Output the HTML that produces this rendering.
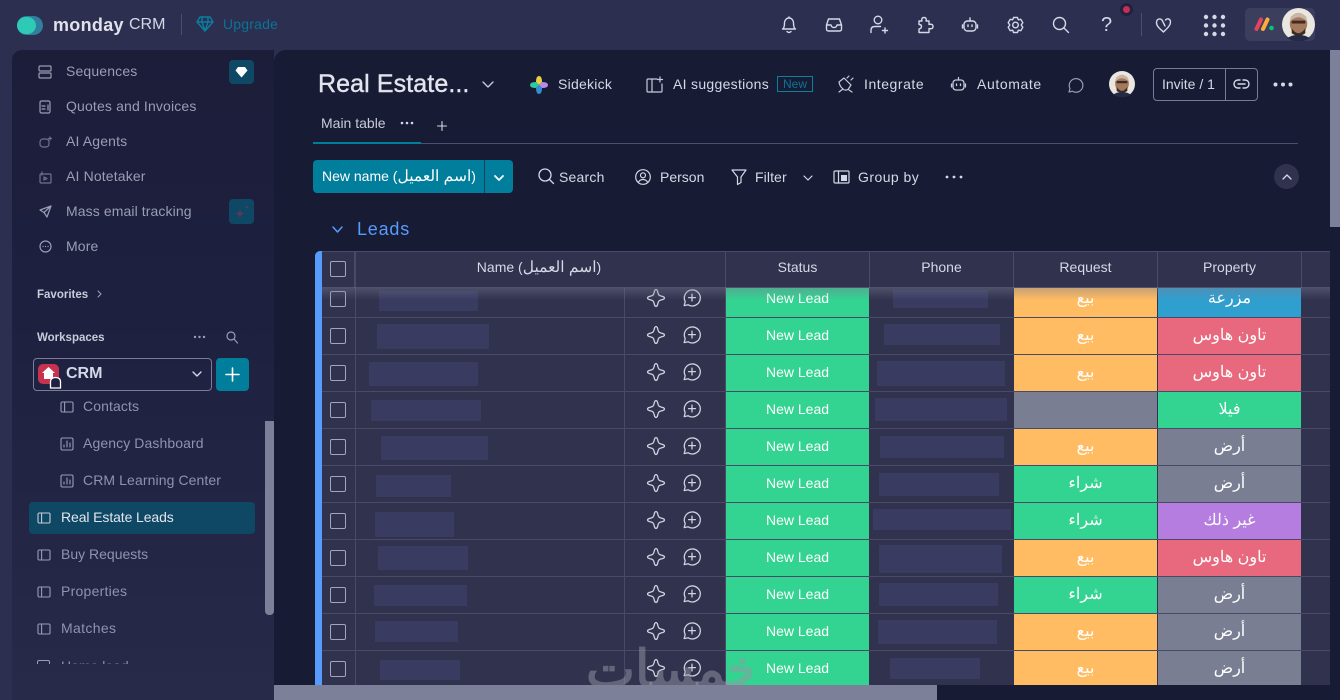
<!DOCTYPE html>
<html lang="en"><head><meta charset="utf-8"><title>monday CRM</title>
<style>
*{box-sizing:border-box}
html,body{margin:0;padding:0;width:1340px;height:700px;overflow:hidden;background:#2c2f4f;font-family:"Liberation Sans","Noto Sans CJK SC",sans-serif;color:#d5d8e6}
.a{position:absolute}
.t{position:absolute;white-space:nowrap;font-size:14px;line-height:18px}
svg.i{position:absolute;fill:none;stroke:#d5d8e6;stroke-width:1.4;stroke-linecap:round;stroke-linejoin:round;overflow:visible}
#side{left:12px;top:50px;width:262px;height:650px;background:linear-gradient(#1b1d39,#1e2040 40%,#282a4a 100%);border-radius:10px 0 0 0}
.nav{color:#9a9db4;letter-spacing:.15px}
.sub{color:#8f93ad;letter-spacing:.1px}
#main{left:274px;top:50px;width:1066px;height:650px;background:#181b34;border-radius:12px 0 0 0}
.row{position:absolute;left:322px;width:1008px;height:37px;background:#30324e;border-bottom:1px solid #484a68;overflow:hidden}
.row .v{position:absolute;top:0;width:1px;height:37px;background:#484a68}
.c{position:absolute;top:0;height:36px;width:143px;color:#fff;text-align:center;font-size:14px;line-height:35px}
.rq,.pr{font-size:16px}
.g{background:#33d391}.o{background:#ffbc62}.b{background:#2f9fcf}.p{background:#e8697d}.y{background:#797e93}.u{background:#b57de0}
.s{left:404px}.rq{left:692px}.pr{left:836px}
.ph{position:absolute;background:#393b61}
.cb{position:absolute;left:8px;top:10px;width:16px;height:16px;border:1px solid #a3a6bb;border-radius:2px}
.h{position:absolute;top:251px;height:37px;background:#30324e;font-size:14px;line-height:31px;text-align:center;color:#d5d8e6;border-right:1px solid #484a68;border-top:1px solid #484a68}
.ar{font-size:15.5px}
.k{stroke-width:1.3!important;stroke:#d0d2df!important}
</style></head><body>
<svg width="0" height="0" style="position:absolute"><defs>
<symbol id="star" viewBox="0 0 20 20"><path d="M10 1.500C11.200 1.500 11.500 3 12 5 12.600 7 13 7.400 15 8 17 8.500 18.500 8.800 18.500 10 18.500 11.200 17 11.500 15 12 13 12.600 12.600 13 12 15 11.500 17 11.200 18.500 10 18.500 8.800 18.500 8.500 17 8 15 7.400 13 7 12.600 5 12 3 11.500 1.500 11.200 1.500 10 1.500 8.800 3 8.500 5 8 7 7.400 7.400 7 8 5 8.500 3 8.800 1.500 10 1.500Z"/></symbol>
<symbol id="cm" viewBox="0 0 20 20"><path d="M2.200 17.600 3.200 13.600A8 8 0 1 1 6.200 16.800Z"/><path d="M10 6.200V13M6.600 9.600H13.400"/></symbol>
<symbol id="tb" viewBox="0 0 14 14"><rect x="1" y="2" width="12" height="10" rx="1.200"/><path d="M4.600 2V12"/></symbol>
<symbol id="av" viewBox="0 0 34 34"><circle cx="17" cy="17" r="17" fill="#e9e7df"/><ellipse cx="17" cy="16" rx="9" ry="11" fill="#a5795c"/><path d="M8 14Q17 5 26 14L25 9Q17 1 9 9Z" fill="#c9b6a6"/><rect x="10" y="13" width="14" height="3" fill="#3e2c25"/><path d="M10 21Q17 31 24 21L24 26Q17 31 10 26Z" fill="#3b2a22"/><path d="M5 31Q17 24 29 31L22 34H12Z" fill="#252a44"/></symbol>
</defs></svg>

<!-- top bar -->
<div class="a" style="left:17px;top:16px;width:26px;height:19px;border-radius:10px;background:#2f7f9d"></div>
<div class="a" style="left:17px;top:17px;width:19px;height:17px;border-radius:9px;background:#2ec9b7"></div>
<div class="t" style="left:53px;top:13px;font-size:18px;line-height:24px;font-weight:700;color:#e0e1ea;letter-spacing:.3px">monday</div>
<div class="t" style="left:129px;top:13px;font-size:16px;line-height:24px;color:#d5d8e6">CRM</div>
<div class="a" style="left:181px;top:14px;width:1px;height:21px;background:#4b4e6e"></div>
<svg class="i" style="left:196px;top:16px;stroke:#0a7fa0" width="18" height="16" viewBox="0 0 18 16"><path d="M4 1H14L17 6 9 15 1 6ZM1 6H17M6 6 9 15 12 6M6 1 6 6M12 1 12 6"/></svg>
<div class="t" style="left:223px;top:15px;color:#0a7396;letter-spacing:.2px">Upgrade</div>

<svg class="i" style="left:781px;top:16px" width="16" height="18" viewBox="0 0 16 18"><path d="M2 13Q3.500 11 3.500 7A4.500 5 0 0 1 12.500 7Q12.500 11 14 13ZM1.500 13H14.500M6 15.500Q8 17.500 10 15.500M8 1V2"/></svg>
<svg class="i" style="left:825px;top:17px" width="18" height="16" viewBox="0 0 18 16"><path d="M1.500 8 3.500 2H14.500L16.500 8V12Q16.500 14 14.500 14H3.500Q1.500 14 1.500 12ZM1.500 8H6Q6.500 10.500 9 10.500 11.500 10.500 12 8H16.500"/></svg>
<svg class="i" style="left:870px;top:15px" width="20" height="19" viewBox="0 0 20 19"><circle cx="8" cy="5" r="3.800"/><path d="M1 17.500V15Q1 11.500 5 11.500H10.500M15 13V18M12.500 15.500H17.500"/></svg>
<svg class="i" style="left:916px;top:16px" width="18" height="18" viewBox="0 0 18 18"><path d="M3 5H6Q5 1.500 8 1.500 11 1.500 10 5H13V8.500Q17 7.500 17 10.500 17 13.500 13 12.500V16.500H3V13Q5.500 12.500 5.500 10.500 5.500 8.500 3 8.500Z"/></svg>
<svg class="i" style="left:962px;top:17px" width="16" height="16" viewBox="0 0 16 16"><rect x="2" y="4" width="12" height="10" rx="3.500"/><path d="M8 1V4M.5 8V11M15.500 8V11M6 8V9.500M10 8V9.500"/></svg>
<svg class="i" style="left:1007px;top:16px" width="17" height="18" viewBox="0 0 17 18"><path d="M6.500 1.500H10.500L11.300 3.800 13.800 3.300 15.800 6.700 14.200 9 15.800 11.300 13.800 14.700 11.300 14.200 10.500 16.500H6.500L5.700 14.200 3.200 14.700 1.200 11.300 2.800 9 1.200 6.700 3.200 3.300 5.700 3.800Z"/><circle cx="8.500" cy="9" r="2.800"/></svg>
<svg class="i" style="left:1052px;top:16px" width="18" height="18" viewBox="0 0 18 18"><circle cx="7.500" cy="7.500" r="6"/><path d="M12 12 16.500 16.500"/></svg>
<div class="t" style="left:1099px;top:13px;width:15px;text-align:center;font-size:20px;line-height:24px;color:#d5d8e6">?</div>
<div class="a" style="left:1120px;top:3px;width:13px;height:13px;border-radius:50%;background:#c62e52;border:3px solid #20223f"></div>
<div class="a" style="left:1101px;top:13px;height:21px;width:0"></div>
<div class="a" style="left:1101px;top:0;width:0"></div>
<div class="a" style="left:1101px;top:0;width:0"></div>
<div class="a" style="left:1141px;top:13px;width:1px;height:23px;background:#4b4e6e"></div>
<svg class="i" style="left:1155px;top:17px" width="17" height="16" viewBox="0 0 17 16"><path d="M8.500 15C4 11 1.500 9 1.500 5.500 1.500 2.500 4.500 .8 7 3L10 9M8.500 15C12.500 11 15.500 8.500 15.500 5 15.500 2 12.500 .8 10.500 3"/></svg>
<svg class="a" style="left:1203px;top:14px" width="23" height="23" viewBox="0 0 23 23" fill="#d5d8e6"><circle cx="3" cy="3" r="2.200"/><circle cx="11.500" cy="3" r="2.200"/><circle cx="20" cy="3" r="2.200"/><circle cx="3" cy="11.500" r="2.200"/><circle cx="11.500" cy="11.500" r="2.200"/><circle cx="20" cy="11.500" r="2.200"/><circle cx="3" cy="20" r="2.200"/><circle cx="11.500" cy="20" r="2.200"/><circle cx="20" cy="20" r="2.200"/></svg>
<div class="a" style="left:1245px;top:8px;width:70px;height:33px;border-radius:5px;background:#3b3e5d"></div>
<svg class="a" style="left:1254px;top:17px" width="20" height="14" viewBox="0 0 20 14"><path d="M2.500 12 7 2.500" stroke="#e2445c" stroke-width="4" stroke-linecap="round"/><path d="M9 12 13.500 2.500" stroke="#fdab3d" stroke-width="4" stroke-linecap="round"/><circle cx="17.500" cy="11" r="2.300" fill="#00ca72"/></svg>
<svg class="a" style="left:1282px;top:8px" width="33" height="33"><use href="#av"/></svg>

<!-- sidebar -->
<div id="side" class="a"></div>
<svg class="i" style="left:38px;top:65px;stroke:#9a9db4;stroke-width:1.200" width="14" height="14" viewBox="0 0 14 14"><rect x="1" y="1" width="12" height="5" rx="1"/><rect x="1" y="8" width="12" height="5" rx="1"/></svg>
<div class="t nav" style="left:66px;top:62px">Sequences</div>
<div class="a" style="left:229px;top:60px;width:25px;height:24px;border-radius:4px;background:#0e4864"></div>
<svg class="a" style="left:235px;top:66px" width="13" height="12" viewBox="0 0 13 12"><path d="M3 1H10L12.500 4.500 6.500 11.500 .5 4.500Z" fill="#fff"/></svg>
<svg class="i" style="left:39px;top:100px;stroke:#9a9db4;stroke-width:1.200" width="12" height="14" viewBox="0 0 12 14"><rect x="1" y="1" width="10" height="12" rx="1.500"/><path d="M3 6H6M3 9H6M9 5V10"/></svg>
<div class="t nav" style="left:66px;top:97px">Quotes and Invoices</div>
<svg class="i" style="left:39px;top:136px;stroke:#6f7290;stroke-width:1.200" width="13" height="12" viewBox="0 0 13 12"><rect x="1" y="3" width="9" height="8" rx="3"/><path d="M11 1V4M9.500 2.500H12.500"/></svg>
<div class="t nav" style="left:66px;top:132px">AI Agents</div>
<svg class="i" style="left:39px;top:171px;stroke:#6f7290;stroke-width:1.200" width="13" height="13" viewBox="0 0 13 13"><rect x="1" y="3" width="11" height="9" rx="1"/><path d="M5 6 8 7.500 5 9ZM3 1V4"/></svg>
<div class="t nav" style="left:66px;top:167px">AI Notetaker</div>
<svg class="i" style="left:39px;top:205px;stroke:#9a9db4;stroke-width:1.200" width="13" height="13" viewBox="0 0 13 13"><path d="M12 1 1 5 5 7.500 8 12ZM12 1 5 7.500"/></svg>
<div class="t nav" style="left:66px;top:202px;letter-spacing:.1px">Mass email tracking</div>
<div class="a" style="left:229px;top:199px;width:25px;height:25px;border-radius:4px;background:#0e4864"></div>
<svg class="a" style="left:234px;top:204px" width="16" height="16" viewBox="0 0 16 16" fill="#5a3a5c"><path d="M6 5C6.500 8 7.500 9 11 9.500 7.500 10 6.500 11 6 15 5.500 11 4.500 10 1 9.500 4.500 9 5.500 8 6 5Z"/><path d="M13 1C13.200 2.500 13.700 3 15 3.200 13.700 3.500 13.200 4 13 5.500 12.800 4 12.300 3.500 11 3.200 12.300 3 12.800 2.500 13 1Z"/></svg>
<svg class="i" style="left:39px;top:240px;stroke:#9a9db4;stroke-width:1.200" width="13" height="13" viewBox="0 0 13 13"><circle cx="6.500" cy="6.500" r="5.500"/><path d="M4 6.500H4.100M6.500 6.500H6.600M9 6.500H9.100"/></svg>
<div class="t nav" style="left:66px;top:237px">More</div>
<div class="t" style="left:37px;top:286px;font-size:11.500px;font-weight:700;color:#c9ccd9">Favorites</div>
<svg class="i" style="left:97px;top:290px;stroke:#9a9db4;stroke-width:1.100" width="5" height="8" viewBox="0 0 5 8"><path d="M1 1 4 4 1 7"/></svg>
<div class="t" style="left:37px;top:329px;font-size:11.500px;font-weight:700;color:#c9ccd9">Workspaces</div>
<svg class="a" style="left:193px;top:335px" width="13" height="4" fill="#9a9db4"><circle cx="2" cy="2" r="1.200"/><circle cx="6.500" cy="2" r="1.200"/><circle cx="11" cy="2" r="1.200"/></svg>
<svg class="i" style="left:226px;top:331px;stroke:#9a9db4;stroke-width:1.200" width="12" height="13" viewBox="0 0 12 13"><circle cx="5" cy="5" r="4"/><path d="M8 8 11.500 12"/></svg>
<div class="a" style="left:33px;top:358px;width:179px;height:33px;border:1px solid #7a7d95;border-radius:4px"></div>
<div class="a" style="left:38px;top:364px;width:21px;height:20px;border-radius:5px;background:#c7324f"></div>
<svg class="a" style="left:41px;top:366px" width="15" height="14" viewBox="0 0 15 14"><path d="M7.500 1 14 7H12V13H3V7H1Z" fill="#fff"/></svg>
<svg class="a" style="left:49px;top:376px" width="13" height="13" viewBox="0 0 13 13"><path d="M1.500 12V6Q1.500 1.500 6.500 1.500 11.500 1.500 11.500 6V12Z" fill="#1f2140" stroke="#fff" stroke-width="1.300"/></svg>
<div class="t" style="left:66px;top:364px;font-size:16px;line-height:20px;font-weight:700;color:#d5d8e6">CRM</div>
<svg class="i" style="left:192px;top:371px;stroke:#d5d8e6" width="10" height="7" viewBox="0 0 10 7"><path d="M1 1 5 5 9 1"/></svg>
<div class="a" style="left:216px;top:358px;width:33px;height:33px;border-radius:4px;background:#007e9b"></div>
<svg class="i" style="left:225px;top:367px;stroke:#fff;stroke-width:1.600" width="15" height="15" viewBox="0 0 15 15"><path d="M7.500 1V14M1 7.500H14"/></svg>
<svg class="i" style="left:60px;top:400px;stroke:#9a9db4;stroke-width:1.100" width="14" height="14"><use href="#tb"/></svg>
<div class="t sub" style="left:83px;top:397px">Contacts</div>
<svg class="i" style="left:60px;top:437px;stroke:#9a9db4;stroke-width:1.100" width="14" height="14" viewBox="0 0 14 14"><rect x="1" y="1" width="12" height="12" rx="1.500"/><path d="M4 10V8M7 10V4M10 10V6"/></svg>
<div class="t sub" style="left:83px;top:434px">Agency Dashboard</div>
<svg class="i" style="left:60px;top:474px;stroke:#9a9db4;stroke-width:1.100" width="14" height="14" viewBox="0 0 14 14"><rect x="1" y="1" width="12" height="12" rx="1.500"/><path d="M4 10V8M7 10V4M10 10V6"/></svg>
<div class="t sub" style="left:83px;top:471px">CRM Learning Center</div>
<div class="a" style="left:29px;top:502px;width:226px;height:32px;border-radius:4px;background:#0e4864"></div>
<svg class="i" style="left:37px;top:511px;stroke:#c8cbd9;stroke-width:1.100" width="14" height="14"><use href="#tb"/></svg>
<div class="t" style="left:61px;top:508px;color:#e3e5ee;letter-spacing:-.1px">Real Estate Leads</div>
<svg class="i" style="left:37px;top:548px;stroke:#9a9db4;stroke-width:1.100" width="14" height="14"><use href="#tb"/></svg>
<div class="t sub" style="left:61px;top:545px;letter-spacing:0">Buy Requests</div>
<svg class="i" style="left:37px;top:585px;stroke:#9a9db4;stroke-width:1.100" width="14" height="14"><use href="#tb"/></svg>
<div class="t sub" style="left:61px;top:582px;letter-spacing:.25px">Properties</div>
<svg class="i" style="left:37px;top:622px;stroke:#9a9db4;stroke-width:1.100" width="14" height="14"><use href="#tb"/></svg>
<div class="t sub" style="left:61px;top:619px;letter-spacing:.35px">Matches</div>
<div class="a" style="left:37px;top:660px;width:104px;height:4px;overflow:hidden;color:#8f93ad;font-size:14px;line-height:18px;white-space:nowrap"><span style="position:absolute;left:0;top:0;width:13px;height:8px;border:1px solid #9a9db4;border-radius:2px"></span><span style="position:absolute;left:24px;top:-3px">Home lead</span></div>
<div class="a" style="left:265px;top:421px;width:9px;height:194px;border-radius:0 0 4px 4px;background:#7c8098"></div>

<!-- main -->
<div id="main" class="a"></div>
<div class="t" style="left:318px;top:68px;font-size:25px;line-height:32px;color:#e3e5ee;letter-spacing:.1px;-webkit-text-stroke:.4px #e3e5ee">Real Estate...</div>
<svg class="i" style="left:482px;top:81px;stroke:#c8cbd9" width="12" height="7" viewBox="0 0 12 7"><path d="M1 1 6 6 11 1"/></svg>
<svg class="a" style="left:530px;top:76px" width="18" height="18" viewBox="0 0 18 18"><path d="M9 0Q12 0 12 6L9 9 6 6Q6 0 9 0Z" fill="#e8d040"/><path d="M18 9Q18 12 12 12L9 9 12 6Q18 6 18 9Z" fill="#b98be8"/><path d="M9 18Q6 18 6 12L9 9 12 12Q12 18 9 18Z" fill="#2f8fd8"/><path d="M0 9Q0 6 6 6L9 9 6 12Q0 12 0 9Z" fill="#2ec9a0"/></svg>
<div class="t" style="left:558px;top:75px;color:#d5d8e6;letter-spacing:.25px">Sidekick</div>
<svg class="i" style="left:646px;top:76px;stroke:#c8cbd9;stroke-width:1.200" width="18" height="17" viewBox="0 0 18 17"><path d="M11 3H2Q1 3 1 4V15Q1 16 2 16H15Q16 16 16 15V8M6 3V16M14 1V6M11.500 3.500H16.500"/></svg>
<div class="t" style="left:673px;top:75px;color:#d5d8e6;letter-spacing:.3px">AI suggestions</div>
<div class="t" style="left:777px;top:76px;width:36px;height:16px;border:1px solid #0a7fa0;font-size:12px;line-height:14px;text-align:center;color:#0a7396">New</div>
<svg class="i" style="left:838px;top:76px;stroke:#c8cbd9;stroke-width:1.200" width="15" height="17" viewBox="0 0 15 17"><path d="M1 6 6 2 13 9 10 13.500Q7 15 5 13L3 11Q1.500 9 1 6ZM9 2 11 0M13 4 15 2M5 13 1 16M11 14 14 16"/></svg>
<div class="t" style="left:864px;top:75px;color:#d5d8e6;letter-spacing:.55px">Integrate</div>
<svg class="i" style="left:951px;top:77px;stroke:#c8cbd9;stroke-width:1.300" width="15" height="15" viewBox="0 0 15 15"><rect x="2" y="3" width="11" height="10" rx="3"/><path d="M7.500 .5V3M.5 7V10M14.500 7V10M5.500 7V8.500M9.500 7V8.500"/></svg>
<div class="t" style="left:977px;top:75px;color:#d5d8e6;letter-spacing:.6px">Automate</div>
<svg class="i" style="left:1067px;top:77px;stroke:#9a9db4;stroke-width:1.200" width="16" height="16" viewBox="0 0 16 16"><path d="M2 15 3 11.500A6.800 6.800 0 1 1 5.500 14.200Z"/></svg>
<svg class="a" style="left:1109px;top:71px" width="26" height="26"><use href="#av"/></svg>
<div class="a" style="left:1153px;top:68px;width:105px;height:33px;border:1px solid #797c95;border-radius:4px"></div>
<div class="a" style="left:1225px;top:68px;width:1px;height:33px;background:#797c95"></div>
<div class="t" style="left:1162px;top:75px;color:#d5d8e6">Invite / 1</div>
<svg class="i" style="left:1233px;top:79px;stroke:#d5d8e6;stroke-width:1.400" width="17" height="10" viewBox="0 0 17 10"><path d="M7 1H5A4 4 0 0 0 5 9H7M10 1H12A4 4 0 0 1 12 9H10M5 5H12"/></svg>
<svg class="a" style="left:1273px;top:82px" width="20" height="5" fill="#d5d8e6"><circle cx="2.500" cy="2.500" r="2"/><circle cx="10" cy="2.500" r="2"/><circle cx="17.500" cy="2.500" r="2"/></svg>

<div class="t" style="left:321px;top:114px;color:#c8cbd9">Main table</div>
<svg class="a" style="left:400px;top:121px" width="14" height="4" fill="#d5d8e6"><circle cx="2" cy="2" r="1.300"/><circle cx="7" cy="2" r="1.300"/><circle cx="12" cy="2" r="1.300"/></svg>
<svg class="i" style="left:437px;top:121px;stroke-width:1.100" width="10" height="10" viewBox="0 0 10 10"><path d="M5 .5V9.500M.5 5H9.500"/></svg>
<div class="a" style="left:313px;top:143px;width:985px;height:1px;background:#4b4e6e"></div>
<div class="a" style="left:313px;top:142px;width:108px;height:2px;background:#007e9b"></div>

<div class="a" style="left:313px;top:160px;width:200px;height:33px;border-radius:4px;background:#007e9b"></div>
<div class="a" style="left:484px;top:160px;width:1px;height:33px;background:#1b3f60"></div>
<div class="t" style="left:322px;top:167px;color:#fff;font-size:14px">New name (<span class="ar">اسم العميل</span>)</div>
<svg class="i" style="left:494px;top:175px;stroke:#fff;stroke-width:1.800" width="10" height="7" viewBox="0 0 10 7"><path d="M1 1 5 5 9 1"/></svg>
<svg class="i" style="left:538px;top:168px;stroke-width:1.300" width="17" height="17" viewBox="0 0 17 17"><circle cx="7" cy="7" r="6"/><path d="M11.500 11.500 15.500 15.500"/></svg>
<div class="t" style="left:559px;top:168px;color:#d5d8e6;letter-spacing:.2px">Search</div>
<svg class="i" style="left:635px;top:169px;stroke-width:1.200" width="16" height="16" viewBox="0 0 16 16"><circle cx="8" cy="8" r="7.300"/><circle cx="8" cy="6.300" r="2.500"/><path d="M3.500 13Q5 10.500 8 10.500 11 10.500 12.500 13"/></svg>
<div class="t" style="left:660px;top:168px;color:#d5d8e6">Person</div>
<svg class="i" style="left:731px;top:169px;stroke-width:1.200" width="16" height="16" viewBox="0 0 16 16"><path d="M1 1H15L10 8V13.500L6.500 15.500V8Z"/></svg>
<div class="t" style="left:755px;top:168px;color:#d5d8e6;letter-spacing:.1px">Filter</div>
<svg class="i" style="left:803px;top:175px;stroke-width:1.200" width="10" height="6" viewBox="0 0 10 6"><path d="M1 1 5 5 9 1"/></svg>
<svg class="i" style="left:833px;top:170px;stroke-width:1.200" width="17" height="14" viewBox="0 0 17 14"><rect x="1" y="1" width="15" height="12" rx="1"/><path d="M5.500 1V13"/><rect x="8" y="5" width="6" height="6" fill="#d5d8e6" stroke="none"/></svg>
<div class="t" style="left:858px;top:168px;color:#d5d8e6;letter-spacing:.45px">Group by</div>
<svg class="a" style="left:945px;top:175px" width="18" height="4" fill="#d5d8e6"><circle cx="2" cy="2" r="1.400"/><circle cx="9" cy="2" r="1.400"/><circle cx="16" cy="2" r="1.400"/></svg>
<div class="a" style="left:1274px;top:164px;width:25px;height:25px;border-radius:50%;background:#30324e"></div>
<svg class="i" style="left:1282px;top:174px;stroke-width:1.300" width="10" height="6" viewBox="0 0 10 6"><path d="M1 5 5 1 9 5"/></svg>

<svg class="i" style="left:332px;top:226px;stroke:#579bfc;stroke-width:1.500" width="11" height="7" viewBox="0 0 11 7"><path d="M1 1 5.500 6 10 1"/></svg>
<div class="t" style="left:357px;top:217px;font-size:18px;line-height:24px;color:#579bfc;letter-spacing:.8px">Leads</div>

<!-- table head -->
<div class="a" style="left:315px;top:251px;width:7px;height:436px;background:#579bfc;border-radius:5px 0 0 0"></div>
<div class="h" style="left:322px;width:33px"><div class="cb" style="top:9px;left:8px"></div></div>
<div class="h" style="left:355px;width:371px;border-left:1px solid #484a68;padding-right:3px">Name (<span class="ar">اسم العميل</span>)</div>
<div class="h" style="left:726px;width:144px">Status</div>
<div class="h" style="left:870px;width:144px">Phone</div>
<div class="h" style="left:1014px;width:144px">Request</div>
<div class="h" style="left:1158px;width:144px">Property</div>
<div class="h" style="left:1302px;width:28px;border-right:0"></div>

<!-- rows -->
<div class="row" style="top:288px;height:30px"><div class="cb" style="top:3px"></div><div class="v" style="left:33px"></div><div class="v" style="left:302px"></div><div class="v" style="left:403px"></div><div class="ph" style="left:57px;top:3px;width:99px;height:20px"></div><div class="c g s" style="height:29px;line-height:21px">New Lead</div><div class="ph" style="left:571px;top:2px;width:95px;height:18px"></div><div class="c o rq" style="height:29px;line-height:21px">بيع</div><div class="c b pr" style="height:29px;line-height:21px">مزرعة</div></div>
<div class="row" style="top:318px"><div class="cb"></div><div class="v" style="left:33px"></div><div class="v" style="left:302px"></div><div class="v" style="left:403px"></div><div class="ph" style="left:55px;top:6px;width:112px;height:25px"></div><div class="c g s">New Lead</div><div class="ph" style="left:562px;top:6px;width:116px;height:21px"></div><div class="c o rq">بيع</div><div class="c p pr">تاون هاوس</div></div>
<div class="row" style="top:355px"><div class="cb"></div><div class="v" style="left:33px"></div><div class="v" style="left:302px"></div><div class="v" style="left:403px"></div><div class="ph" style="left:47px;top:7px;width:109px;height:24px"></div><div class="c g s">New Lead</div><div class="ph" style="left:555px;top:6px;width:128px;height:25px"></div><div class="c o rq">بيع</div><div class="c p pr">تاون هاوس</div></div>
<div class="row" style="top:392px"><div class="cb"></div><div class="v" style="left:33px"></div><div class="v" style="left:302px"></div><div class="v" style="left:403px"></div><div class="ph" style="left:49px;top:8px;width:110px;height:21px"></div><div class="c g s">New Lead</div><div class="ph" style="left:553px;top:6px;width:132px;height:23px"></div><div class="c y rq"></div><div class="c g pr">فيلا</div></div>
<div class="row" style="top:429px"><div class="cb"></div><div class="v" style="left:33px"></div><div class="v" style="left:302px"></div><div class="v" style="left:403px"></div><div class="ph" style="left:59px;top:7px;width:107px;height:24px"></div><div class="c g s">New Lead</div><div class="ph" style="left:558px;top:7px;width:124px;height:22px"></div><div class="c o rq">بيع</div><div class="c y pr">أرض</div></div>
<div class="row" style="top:466px"><div class="cb"></div><div class="v" style="left:33px"></div><div class="v" style="left:302px"></div><div class="v" style="left:403px"></div><div class="ph" style="left:54px;top:9px;width:75px;height:22px"></div><div class="c g s">New Lead</div><div class="ph" style="left:557px;top:7px;width:120px;height:23px"></div><div class="c g rq">شراء</div><div class="c y pr">أرض</div></div>
<div class="row" style="top:503px"><div class="cb"></div><div class="v" style="left:33px"></div><div class="v" style="left:302px"></div><div class="v" style="left:403px"></div><div class="ph" style="left:53px;top:9px;width:79px;height:25px"></div><div class="c g s">New Lead</div><div class="ph" style="left:551px;top:6px;width:138px;height:21px"></div><div class="c g rq">شراء</div><div class="c u pr">غير ذلك</div></div>
<div class="row" style="top:540px"><div class="cb"></div><div class="v" style="left:33px"></div><div class="v" style="left:302px"></div><div class="v" style="left:403px"></div><div class="ph" style="left:56px;top:6px;width:90px;height:24px"></div><div class="c g s">New Lead</div><div class="ph" style="left:557px;top:5px;width:123px;height:28px"></div><div class="c o rq">بيع</div><div class="c p pr">تاون هاوس</div></div>
<div class="row" style="top:577px"><div class="cb"></div><div class="v" style="left:33px"></div><div class="v" style="left:302px"></div><div class="v" style="left:403px"></div><div class="ph" style="left:52px;top:8px;width:93px;height:21px"></div><div class="c g s">New Lead</div><div class="ph" style="left:557px;top:6px;width:119px;height:23px"></div><div class="c g rq">شراء</div><div class="c y pr">أرض</div></div>
<div class="row" style="top:614px"><div class="cb"></div><div class="v" style="left:33px"></div><div class="v" style="left:302px"></div><div class="v" style="left:403px"></div><div class="ph" style="left:53px;top:7px;width:83px;height:21px"></div><div class="c g s">New Lead</div><div class="ph" style="left:556px;top:6px;width:119px;height:24px"></div><div class="c o rq">بيع</div><div class="c y pr">أرض</div></div>
<div class="row" style="top:651px"><div class="cb"></div><div class="v" style="left:33px"></div><div class="v" style="left:302px"></div><div class="v" style="left:403px"></div><div class="ph" style="left:58px;top:9px;width:80px;height:20px"></div><div class="c g s">New Lead</div><div class="ph" style="left:568px;top:7px;width:90px;height:21px"></div><div class="c o rq">بيع</div><div class="c y pr">أرض</div></div>

<!-- row action icons -->
<svg class="i k" style="left:646px;top:288px" width="20" height="20"><use href="#star"/></svg><svg class="i k" style="left:682px;top:288px" width="20" height="20"><use href="#cm"/></svg>
<svg class="i k" style="left:646px;top:325px" width="20" height="20"><use href="#star"/></svg><svg class="i k" style="left:682px;top:325px" width="20" height="20"><use href="#cm"/></svg>
<svg class="i k" style="left:646px;top:362px" width="20" height="20"><use href="#star"/></svg><svg class="i k" style="left:682px;top:362px" width="20" height="20"><use href="#cm"/></svg>
<svg class="i k" style="left:646px;top:399px" width="20" height="20"><use href="#star"/></svg><svg class="i k" style="left:682px;top:399px" width="20" height="20"><use href="#cm"/></svg>
<svg class="i k" style="left:646px;top:436px" width="20" height="20"><use href="#star"/></svg><svg class="i k" style="left:682px;top:436px" width="20" height="20"><use href="#cm"/></svg>
<svg class="i k" style="left:646px;top:473px" width="20" height="20"><use href="#star"/></svg><svg class="i k" style="left:682px;top:473px" width="20" height="20"><use href="#cm"/></svg>
<svg class="i k" style="left:646px;top:510px" width="20" height="20"><use href="#star"/></svg><svg class="i k" style="left:682px;top:510px" width="20" height="20"><use href="#cm"/></svg>
<svg class="i k" style="left:646px;top:547px" width="20" height="20"><use href="#star"/></svg><svg class="i k" style="left:682px;top:547px" width="20" height="20"><use href="#cm"/></svg>
<svg class="i k" style="left:646px;top:584px" width="20" height="20"><use href="#star"/></svg><svg class="i k" style="left:682px;top:584px" width="20" height="20"><use href="#cm"/></svg>
<svg class="i k" style="left:646px;top:621px" width="20" height="20"><use href="#star"/></svg><svg class="i k" style="left:682px;top:621px" width="20" height="20"><use href="#cm"/></svg>
<svg class="i k" style="left:646px;top:658px" width="20" height="20"><use href="#star"/></svg><svg class="i k" style="left:682px;top:658px" width="20" height="20"><use href="#cm"/></svg>

<!-- header shadow -->
<div class="a" style="left:322px;top:287px;width:1008px;height:13px;background:linear-gradient(rgba(120,122,145,.45),rgba(120,122,145,0))"></div>

<!-- watermark -->
<div class="t" style="left:586px;top:640px;width:166px;height:45px;overflow:hidden;font-size:52px;font-weight:700;line-height:60px;text-align:center;color:rgba(150,153,165,.5)">خمسات</div>

<!-- scrollbars -->
<div class="a" style="left:274px;top:685px;width:663px;height:15px;background:#7c8098"></div>
<div class="a" style="left:937px;top:685px;width:403px;height:15px;background:#181b34"></div>
<div class="a" style="left:1330px;top:50px;width:10px;height:650px;background:#181b34"></div>
<div class="a" style="left:1330px;top:50px;width:10px;height:177px;background:#7c8098"></div>
</body></html>
